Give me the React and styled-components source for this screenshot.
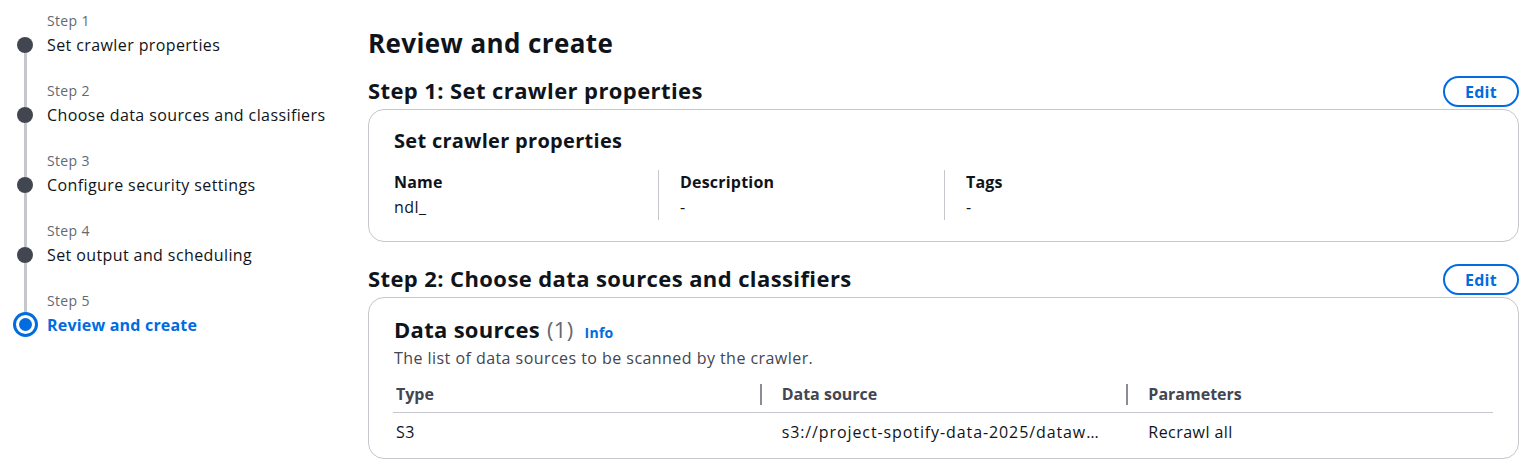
import React from 'react';
import styled, {createGlobalStyle} from 'styled-components';

const GlobalStyle = createGlobalStyle`
    body {
        margin: 0;
        background: #ffffff;
        font-family: "Open Sans", "Noto Sans", Arial, sans-serif;
        color: #0f141a;
    }
`;

const Page = styled.div`
    display: grid;
    grid-template-columns: 368px 1fr;
    width: 1528px;
    height: 467px;
    overflow: hidden;
    background: #fff;
`;

const Nav = styled.nav`
    padding: 10px 0 0 13px;
    display: flex;
    flex-direction: column;
`;

const StepItem = styled.div`
    display: flex;
    gap: 10px;
`;

const Rail = styled.div`
    width: 24px;
    display: flex;
    flex-direction: column;
    align-items: center;
`;

const Line = styled.div`
    width: 3px;
    background: ${(p) => (p.$off ? 'transparent' : '#c6c6cd')};
    height: ${(p) => (p.$size ? `${p.$size}px` : 'auto')};
    flex: ${(p) => (p.$size ? 'none' : 1)};
`;

const Dot = styled.div`
    box-sizing: border-box;
    width: ${(p) => (p.$active ? '25px' : '16px')};
    height: ${(p) => (p.$active ? '25px' : '16px')};
    flex: none;
    border-radius: 50%;
    background: ${(p) => (p.$active ? '#fff' : '#424650')};
    border: ${(p) => (p.$active ? '3px solid #006ce0' : 'none')};
    display: flex;
    align-items: center;
    justify-content: center;

    &::after {
        content: '';
        display: ${(p) => (p.$active ? 'block' : 'none')};
        width: 13px;
        height: 13px;
        border-radius: 50%;
        background: #006ce0;
    }
`;

const StepBody = styled.div`
    display: flex;
    flex-direction: column;
    padding-bottom: 22px;
`;

const StepLabel = styled.span`
    font-size: 14px;
    line-height: 22px;
    letter-spacing: 0.35px;
    color: #656871;
`;

const StepTitle = styled.span`
    font-size: 16px;
    line-height: 26px;
    letter-spacing: ${(p) => (p.$active ? '0.2px' : '0.4px')};
    font-weight: ${(p) => (p.$active ? 700 : 400)};
    color: ${(p) => (p.$active ? '#006ce0' : '#0f141a')};
`;

const Main = styled.main`
    padding: 26px 9px 0 0;
    display: flex;
    flex-direction: column;
`;

const PageTitle = styled.h1`
    margin: 0 0 15px;
    font-size: 26px;
    line-height: 34px;
    letter-spacing: 0.4px;
    font-weight: 700;
    color: #0f141a;
`;

const SectionHeader = styled.div`
    display: flex;
    justify-content: space-between;
    align-items: flex-start;
    height: 32px;
    margin: ${(p) => (p.$gap ? `${p.$gap}px` : 0)} 0 2px;
`;

const SectionTitle = styled.h2`
    margin: 0;
    font-size: 22px;
    line-height: 30px;
    letter-spacing: 0.4px;
    font-weight: 700;
`;

const EditButton = styled.button`
    box-sizing: border-box;
    align-self: flex-end;
    width: 76px;
    height: 31px;
    border: 2px solid #006ce0;
    border-radius: 20px;
    background: #fff;
    color: #006ce0;
    font-family: inherit;
    font-size: 16px;
    font-weight: 700;
    letter-spacing: 0.3px;
    cursor: pointer;
`;

const Container = styled.section`
    border: 1px solid #c6c6cd;
    border-radius: 16px;
    padding: 17px 25px ${(p) => p.$bottom}px;
`;

const ContainerTitle = styled.h3`
    margin: 0 0 ${(p) => p.$below}px;
    font-size: ${(p) => p.$size}px;
    line-height: 28px;
    letter-spacing: 0.3px;
    font-weight: 700;
    display: flex;
    align-items: baseline;
`;

const Counter = styled.span`
    font-weight: 400;
    color: #656871;
    margin-left: 7px;
`;

const InfoLink = styled.a`
    font-size: 14px;
    font-weight: 700;
    color: #006ce0;
    margin-left: 11px;
    text-decoration: none;
`;

const Description = styled.p`
    margin: -1px 0 6px;
    font-size: 16px;
    line-height: 24px;
    letter-spacing: 0.45px;
    color: #424650;
`;

const KeyValues = styled.div`
    display: grid;
    grid-template-columns: 264px 286px 286px 1fr;
`;

const KeyValue = styled.div`
    display: flex;
    flex-direction: column;
    padding-left: ${(p) => (p.$first ? 0 : 21)}px;
    border-left: ${(p) => (p.$first ? 'none' : '1px solid #c6c6cd')};
`;

const Key = styled.span`
    font-size: 16px;
    line-height: 25px;
    letter-spacing: 0.2px;
    font-weight: 700;
`;

const Value = styled.span`
    font-size: 16px;
    line-height: 25px;
    letter-spacing: 0.45px;
`;

const Table = styled.div`
    display: grid;
    grid-template-columns: repeat(3, 1fr);
    margin-left: -1px;
`;

const HeadCell = styled.div`
    display: flex;
    align-items: center;
    height: 36px;
    border-bottom: 1px solid #c6c6cd;
    font-size: 16px;
    font-weight: 700;
    color: #424650;
    padding-left: ${(p) => (p.$first ? 3 : 0)}px;
`;

const HeadDivider = styled.span`
    width: 2px;
    height: 21px;
    background: #8c8c94;
    margin-right: 20px;
`;

const Cell = styled.div`
    height: 38px;
    display: flex;
    align-items: center;
    font-size: 16px;
    letter-spacing: ${(p) => (p.$wide ? 0.9 : 0.45)}px;
    padding-left: ${(p) => (p.$first ? 3 : 22)}px;
    padding-right: 24px;
    min-width: 0;

    & span {
        white-space: nowrap;
        overflow: hidden;
        text-overflow: ellipsis;
    }
`;

const steps = [
    'Set crawler properties',
    'Choose data sources and classifiers',
    'Configure security settings',
    'Set output and scheduling',
    'Review and create',
];

const App = () => {
    return (
        <>
            <GlobalStyle />
            <Page>
                <Nav>
                    {steps.map((title, i) => {
                        const active = i === steps.length - 1;
                        return (
                            <StepItem key={title}>
                                <Rail>
                                    <Line $off={i === 0} $size={active ? 22 : 27} />
                                    <Dot $active={active} />
                                    <Line $off={active} />
                                </Rail>
                                <StepBody>
                                    <StepLabel>Step {i + 1}</StepLabel>
                                    <StepTitle $active={active}>{title}</StepTitle>
                                </StepBody>
                            </StepItem>
                        );
                    })}
                </Nav>
                <Main>
                    <PageTitle>Review and create</PageTitle>

                    <SectionHeader>
                        <SectionTitle>Step 1: Set crawler properties</SectionTitle>
                        <EditButton>Edit</EditButton>
                    </SectionHeader>
                    <Container $bottom={21}>
                        <ContainerTitle $size={20} $below={15}>Set crawler properties</ContainerTitle>
                        <KeyValues>
                            <KeyValue $first>
                                <Key>Name</Key>
                                <Value>ndl_</Value>
                            </KeyValue>
                            <KeyValue>
                                <Key>Description</Key>
                                <Value>-</Value>
                            </KeyValue>
                            <KeyValue>
                                <Key>Tags</Key>
                                <Value>-</Value>
                            </KeyValue>
                        </KeyValues>
                    </Container>

                    <SectionHeader $gap={21}>
                        <SectionTitle>Step 2: Choose data sources and classifiers</SectionTitle>
                        <EditButton>Edit</EditButton>
                    </SectionHeader>
                    <Container $bottom={7}>
                        <ContainerTitle $size={22} $below={0}>
                            Data sources<Counter>(1)</Counter>
                            <InfoLink href="#">Info</InfoLink>
                        </ContainerTitle>
                        <Description>The list of data sources to be scanned by the crawler.</Description>
                        <Table>
                            <HeadCell $first>Type</HeadCell>
                            <HeadCell><HeadDivider />Data source</HeadCell>
                            <HeadCell><HeadDivider />Parameters</HeadCell>
                            <Cell $first><span>S3</span></Cell>
                            <Cell $wide><span>s3://project-spotify-data-2025/datawarehouse/raw/</span></Cell>
                            <Cell><span>Recrawl all</span></Cell>
                        </Table>
                    </Container>
                </Main>
            </Page>
        </>
    );
};

export default App;
